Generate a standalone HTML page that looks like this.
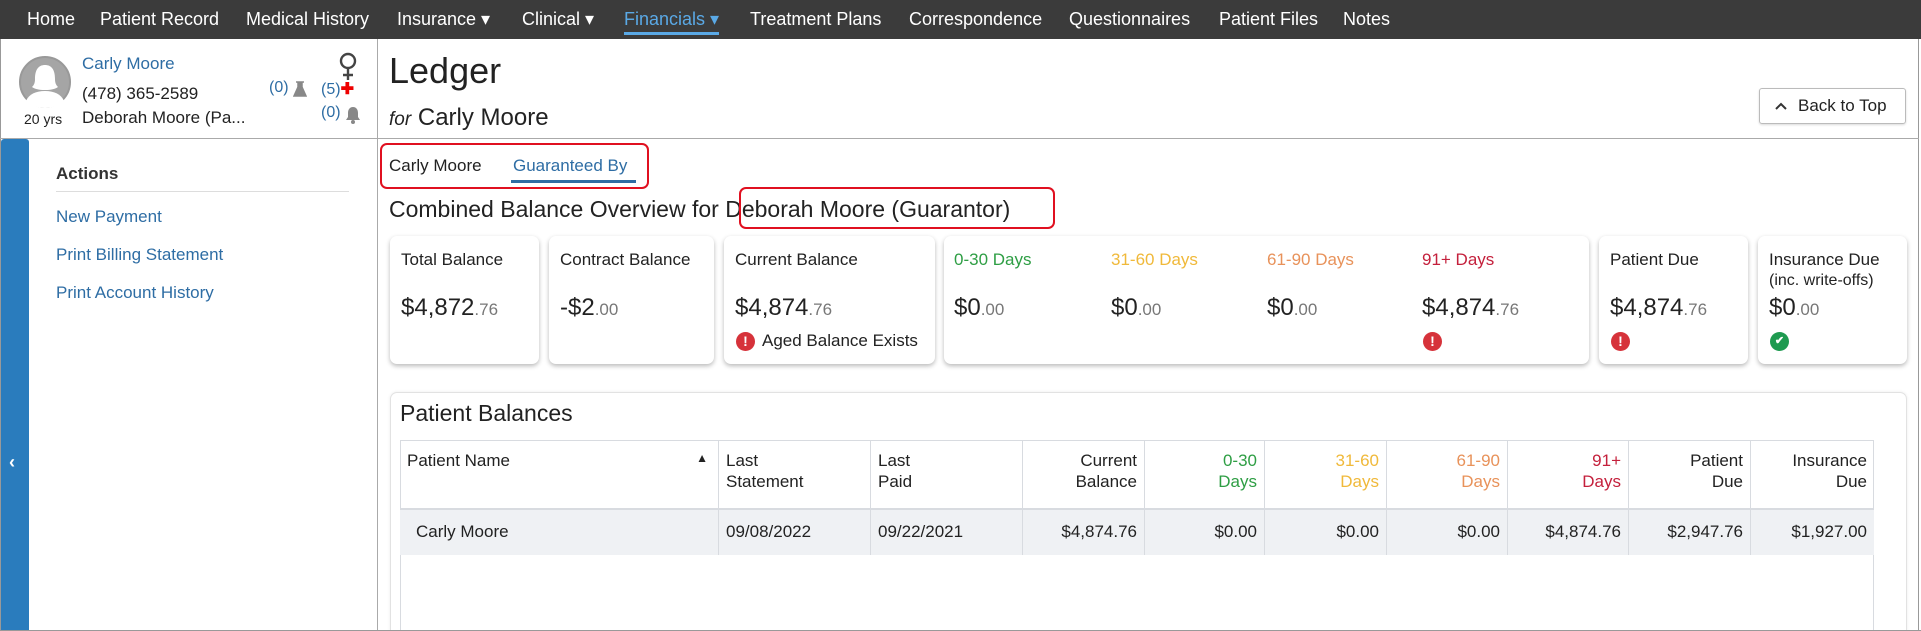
<!DOCTYPE html>
<html><head><meta charset="utf-8"><style>
*{box-sizing:border-box;margin:0;padding:0}
html,body{width:1921px;height:631px;overflow:hidden}
body{background:#fff;font-family:"Liberation Sans",sans-serif;color:#222;position:relative;font-size:17px}
.a{position:absolute;white-space:nowrap}
.nav{position:absolute;left:0;top:0;width:1921px;height:39px;background:#3b3b3b}
.nav span{position:absolute;top:9px;color:#fff;font-size:18px}
.card{position:absolute;top:236px;height:128px;background:#fff;border-radius:7px;box-shadow:0 2px 5px rgba(0,0,0,.28)}
.lbl{position:absolute;top:14px;font-size:17px}
.amt{position:absolute;top:58px;font-size:24px;color:#222}
.amt small{font-size:17px;color:#777}
.ex{position:absolute;width:19px;height:19px;border-radius:50%;background:#d6323a;color:#fff;font-size:14px;font-weight:bold;text-align:center;line-height:19px}
.ok{background:#1e9a50}
.th{position:absolute;top:440px;height:70px;border-right:1px solid #d8dbe0;font-size:17px;line-height:21px;padding:10px 7px}
.td{position:absolute;top:510px;height:45px;border-right:1px solid #d8dbe0;font-size:17px;padding:12px 7px;background:#eff1f4}
.r{text-align:right}
</style></head><body>
<div class="nav">
<span style="left:27px">Home</span><span style="left:100px">Patient Record</span><span style="left:246px">Medical History</span><span style="left:397px">Insurance ▾</span><span style="left:522px">Clinical ▾</span><span style="left:624px;color:#5aa9e6;border-bottom:3px solid #5aa9e6;padding-bottom:2px">Financials ▾</span><span style="left:750px">Treatment Plans</span><span style="left:909px">Correspondence</span><span style="left:1069px">Questionnaires</span><span style="left:1219px">Patient Files</span><span style="left:1343px">Notes</span>
</div>
<div class="a" style="left:0;top:39px;width:1919px;height:592px;border:1px solid #999;border-top:none"></div>
<div class="a" style="left:377px;top:39px;width:1px;height:592px;background:#aaa"></div>
<div class="a" style="left:0;top:138px;width:1919px;height:1px;background:#aaa"></div>
<svg class="a" style="left:18px;top:55px" width="54" height="54" viewBox="0 0 54 54"><circle cx="27" cy="27" r="25" fill="#a5a5a5" stroke="#999" stroke-width="2"/><path d="M17 24c0-10 4-14 10-14s10 4 10 14c0 4 1 6 3 8-3 2-7 3-13 3s-10-1-13-3c2-2 3-4 3-8z" fill="#fff"/><path d="M8 46c3-7 10-10 19-10s16 3 19 10c-5 5-12 7-19 7S13 51 8 46z" fill="#fff"/></svg>
<div class="a" style="left:24px;top:111px;font-size:14px">20 yrs</div>
<div class="a" style="left:82px;top:54px;font-size:17px;color:#2e6da4">Carly Moore</div>
<div class="a" style="left:82px;top:84px;font-size:17px">(478) 365-2589</div>
<div class="a" style="left:82px;top:108px;font-size:17px">Deborah Moore (Pa...</div>
<svg class="a" style="left:338px;top:52px" width="20" height="30" viewBox="0 0 20 30"><circle cx="10" cy="9" r="7" fill="none" stroke="#444" stroke-width="2.4"/><path d="M10 16v12M5 23h10" stroke="#444" stroke-width="2.4"/></svg>
<div class="a" style="left:269px;top:79px;font-size:16px;color:#2e6da4">(0)</div>
<svg class="a" style="left:293px;top:81px" width="14" height="16" viewBox="0 0 14 16"><path d="M3 1h8M5 1v5L1 15h12L9 6V1" fill="#888" stroke="#888" stroke-width="1.5"/></svg>
<div class="a" style="left:321px;top:79px;font-size:16px;color:#2e6da4">(5)<span style="color:#e00;font-weight:bold">✚</span></div>
<div class="a" style="left:321px;top:104px;font-size:16px;color:#2e6da4">(0)</div>
<svg class="a" style="left:345px;top:106px" width="16" height="18" viewBox="0 0 16 18"><path d="M8 1c3.5 0 5 3 5 6v4l2 3H1l2-3V7c0-3 1.5-6 5-6z" fill="#888"/><circle cx="8" cy="16" r="2" fill="#888"/></svg>
<div class="a" style="left:389px;top:50px;font-size:36px;color:#222">Ledger</div>
<div class="a" style="left:389px;top:104px;font-size:24px"><i style="font-size:19px">for</i> Carly Moore</div>
<div class="a" style="left:1759px;top:88px;width:147px;height:36px;border:1px solid #bbb;border-radius:3px;font-size:17px;padding:7px 0 0 38px;box-shadow:0 1px 2px rgba(0,0,0,.15)">Back to Top</div>
<svg class="a" style="left:1774px;top:101px" width="14" height="10"><path d="M2 8L7 3l5 5" stroke="#333" stroke-width="2" fill="none"/></svg>
<div class="a" style="left:1px;top:139px;width:28px;height:492px;background:#2a7cbd;border-radius:3px 3px 0 0"></div>
<div class="a" style="left:9px;top:452px;color:#fff;font-size:18px;font-weight:bold">‹</div>
<div class="a" style="left:56px;top:164px;font-size:17px;font-weight:bold;color:#333">Actions</div>
<div class="a" style="left:56px;top:191px;width:293px;height:1px;background:#ddd"></div>
<div class="a" style="left:56px;top:207px;color:#2e6da4">New Payment</div>
<div class="a" style="left:56px;top:245px;color:#2e6da4">Print Billing Statement</div>
<div class="a" style="left:56px;top:283px;color:#2e6da4">Print Account History</div>
<div class="a" style="left:389px;top:156px">Carly Moore</div>
<div class="a" style="left:513px;top:156px;color:#2e6da4">Guaranteed By</div>
<div class="a" style="left:511px;top:180px;width:125px;height:3px;background:#2e6da4"></div>
<div class="a" style="left:380px;top:143px;width:269px;height:46px;border:2px solid #e01020;border-radius:7px"></div>
<div class="a" style="left:389px;top:196px;font-size:23px">Combined Balance Overview for Deborah Moore (Guarantor)</div>
<div class="a" style="left:739px;top:187px;width:316px;height:42px;border:2px solid #e01020;border-radius:7px"></div>
<div class="card" style="left:390px;width:149px"><div class="lbl" style="left:11px">Total Balance</div><div class="amt" style="left:11px">$4,872<small>.76</small></div></div>
<div class="card" style="left:549px;width:165px"><div class="lbl" style="left:11px">Contract Balance</div><div class="amt" style="left:11px">-$2<small>.00</small></div></div>
<div class="card" style="left:724px;width:211px"><div class="lbl" style="left:11px">Current Balance</div><div class="amt" style="left:11px">$4,874<small>.76</small></div><div class="ex" style="left:12px;top:96px">!</div><div class="a" style="left:38px;top:95px">Aged Balance Exists</div></div>
<div class="card" style="left:944px;width:645px">
<div class="lbl" style="left:10px;color:#2e9e44">0-30 Days</div><div class="amt" style="left:10px">$0<small>.00</small></div>
<div class="lbl" style="left:167px;color:#f0b93a">31-60 Days</div><div class="amt" style="left:167px">$0<small>.00</small></div>
<div class="lbl" style="left:323px;color:#e8925a">61-90 Days</div><div class="amt" style="left:323px">$0<small>.00</small></div>
<div class="lbl" style="left:478px;color:#c4203c">91+ Days</div><div class="amt" style="left:478px">$4,874<small>.76</small></div><div class="ex" style="left:479px;top:96px">!</div></div>
<div class="card" style="left:1599px;width:149px"><div class="lbl" style="left:11px">Patient Due</div><div class="amt" style="left:11px">$4,874<small>.76</small></div><div class="ex" style="left:12px;top:96px">!</div></div>
<div class="card" style="left:1758px;width:149px"><div class="lbl" style="left:11px">Insurance Due</div><div class="a" style="left:11px;top:36px;font-size:16px">(inc. write-offs)</div><div class="amt" style="left:11px">$0<small>.00</small></div><div class="ex ok" style="left:12px;top:96px;font-size:11px">✔</div></div>
<div class="a" style="left:390px;top:392px;width:1517px;height:239px;border:1px solid #e2e2e2;border-bottom:none;border-radius:7px 7px 0 0;box-shadow:0 0 3px rgba(0,0,0,.08)"></div>
<div class="a" style="left:400px;top:400px;font-size:23px">Patient Balances</div>
<div class="a" style="left:400px;top:440px;width:1474px;height:191px;border:1px solid #d8dbe0;border-bottom:none"></div>
<div class="a" style="left:400px;top:508px;width:1474px;height:2px;background:#d8dbe0"></div>
<div class="th" style="left:400px;width:319px">Patient Name<span style="position:absolute;right:10px;top:8px;font-size:12px">▲</span></div>
<div class="th" style="left:719px;width:152px">Last<br>Statement</div>
<div class="th" style="left:871px;width:152px">Last<br>Paid</div>
<div class="th r" style="left:1023px;width:122px">Current<br>Balance</div>
<div class="th r" style="left:1145px;width:120px;color:#2e9e44">0-30<br>Days</div>
<div class="th r" style="left:1265px;width:122px;color:#f0b93a">31-60<br>Days</div>
<div class="th r" style="left:1387px;width:121px;color:#e8925a">61-90<br>Days</div>
<div class="th r" style="left:1508px;width:121px;color:#c4203c">91+<br>Days</div>
<div class="th r" style="left:1629px;width:122px">Patient<br>Due</div>
<div class="th r" style="left:1751px;width:123px;border-right:none">Insurance<br>Due</div>
<div class="td" style="left:400px;width:319px;padding-left:16px">Carly Moore</div>
<div class="td" style="left:719px;width:152px">09/08/2022</div>
<div class="td" style="left:871px;width:152px">09/22/2021</div>
<div class="td r" style="left:1023px;width:122px">$4,874.76</div>
<div class="td r" style="left:1145px;width:120px">$0.00</div>
<div class="td r" style="left:1265px;width:122px">$0.00</div>
<div class="td r" style="left:1387px;width:121px">$0.00</div>
<div class="td r" style="left:1508px;width:121px">$4,874.76</div>
<div class="td r" style="left:1629px;width:122px">$2,947.76</div>
<div class="td r" style="left:1751px;width:123px;border-right:none">$1,927.00</div>
<div class="a" style="left:0;top:630px;width:1921px;height:1px;background:#999"></div>
</body></html>
